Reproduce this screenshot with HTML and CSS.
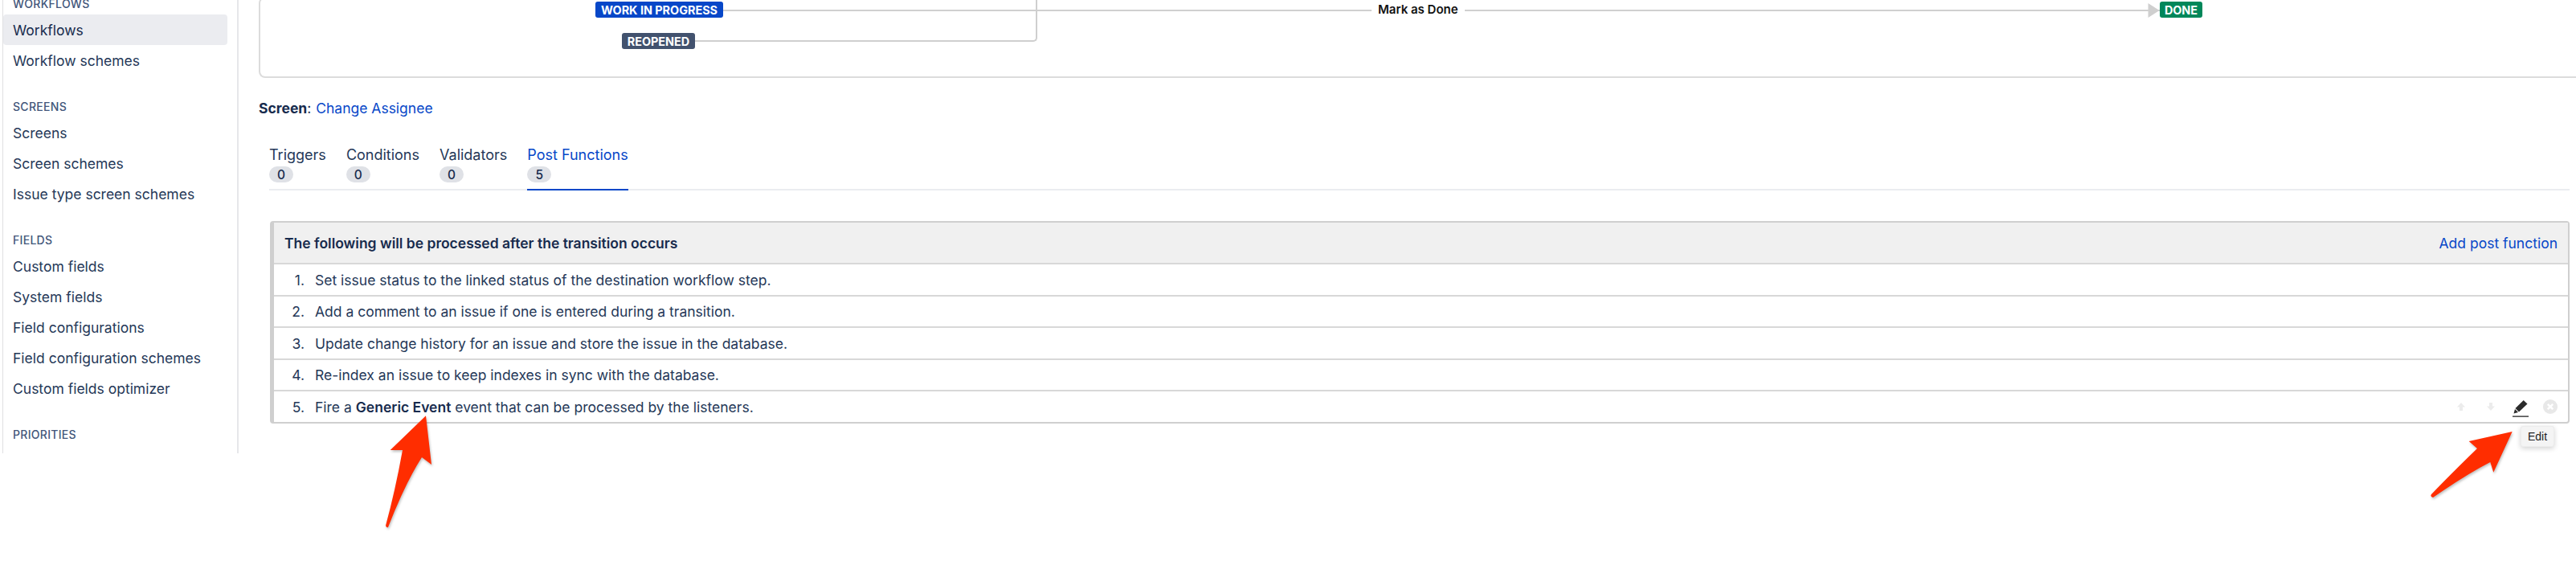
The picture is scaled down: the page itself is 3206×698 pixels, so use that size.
FILE: index.html
```html
<!DOCTYPE html>
<html lang="en">
<head>
<meta charset="utf-8">
<title>Transition: Post Functions</title>
<link rel="stylesheet" href="styles.css">
</head>
<body>
<div class="app">
  <nav class="sidebar">
    <div class="group">
      <h3 class="group-label">WORKFLOWS</h3>
      <a class="nav-item is-active">Workflows</a>
      <a class="nav-item">Workflow schemes</a>
    </div>
    <div class="group">
      <h3 class="group-label">SCREENS</h3>
      <a class="nav-item">Screens</a>
      <a class="nav-item">Screen schemes</a>
      <a class="nav-item">Issue type screen schemes</a>
    </div>
    <div class="group">
      <h3 class="group-label">FIELDS</h3>
      <a class="nav-item">Custom fields</a>
      <a class="nav-item">System fields</a>
      <a class="nav-item">Field configurations</a>
      <a class="nav-item">Field configuration schemes</a>
      <a class="nav-item">Custom fields optimizer</a>
    </div>
    <div class="group">
      <h3 class="group-label">PRIORITIES</h3>
    </div>
  </nav>
  <main class="main">
    <section class="diagram">
      <span class="status status-progress">WORK IN PROGRESS</span>
      <span class="status status-reopened">REOPENED</span>
      <span class="line line-main"></span>
      <span class="line-elbow"></span>
      <span class="transition-name">Mark as Done</span>
      <svg class="line-arrow" viewBox="0 0 14 18" aria-hidden="true"><path d="M0 0L14 9L0 18Z"/></svg>
      <span class="status status-done">DONE</span>
    </section>
    <p class="screen-line"><b class="screen-key">Screen</b>: <a class="link">Change Assignee</a></p>
    <ul class="tabs">
      <li class="tab"><span class="tab-name">Triggers</span><span class="count">0</span></li>
      <li class="tab"><span class="tab-name">Conditions</span><span class="count">0</span></li>
      <li class="tab"><span class="tab-name">Validators</span><span class="count">0</span></li>
      <li class="tab is-active"><span class="tab-name">Post Functions</span><span class="count">5</span></li>
    </ul>
    <section class="panel">
      <header class="panel-head">
        <h2 class="panel-title">The following will be processed after the transition occurs</h2>
        <a class="link">Add post function</a>
      </header>
      <ol class="rows">
        <li class="row"><span class="num">1.</span><span>Set issue status to the linked status of the destination workflow step.</span></li>
        <li class="row"><span class="num">2.</span><span>Add a comment to an issue if one is entered during a transition.</span></li>
        <li class="row"><span class="num">3.</span><span>Update change history for an issue and store the issue in the database.</span></li>
        <li class="row"><span class="num">4.</span><span>Re-index an issue to keep indexes in sync with the database.</span></li>
        <li class="row"><span class="num">5.</span><span>Fire a <b class="strong">Generic Event</b> event that can be processed by the listeners.</span>
          <div class="row-actions">
            <svg class="act act-arrow" viewBox="0 0 12 12" aria-hidden="true"><path d="M6 1L11 6.5H8V11H4V6.5H1Z"/></svg>
            <svg class="act act-arrow" viewBox="0 0 12 12" aria-hidden="true"><path d="M6 11L1 5.500H4V1H8V5.500H11Z"/></svg>
            <svg class="act act-pencil" viewBox="0 0 20 21" aria-hidden="true"><path class="pencil-body" d="M13.700 0L18.500 4.500L8 14.500L3.500 10Z"/><path class="pencil-body" d="M3 11L7 15L1.500 16.500Z"/><path class="pencil-base" d="M0 19.500H20V20.700H0Z"/></svg>
            <svg class="act act-close" viewBox="0 0 18 18" aria-hidden="true"><circle class="close-bg" cx="9" cy="9" r="9"/><path class="close-x" d="M5.800 5.800L12.200 12.200M12.200 5.800L5.800 12.200"/></svg>
          </div>
        </li>
      </ol>
      <div class="tooltip">Edit</div>
    </section>
  </main>
</div>
<svg class="callouts" viewBox="0 0 3206 698" aria-hidden="true">
  <path class="callout" d="M530 517.300L537 578L525 569Q505 600 483 656Q481 657 480 654Q492 610 501 560L485.700 560Z"/>
  <path class="callout" d="M3126.700 537L3103.300 587.700L3099.300 575Q3070 590 3028 619Q3024 618 3026 615Q3050 590 3083 558L3072.700 549Z"/>
</svg>
</body>
</html>
```
FILE: styles.css
```css
* { box-sizing: border-box; }
html, body { margin: 0; padding: 0; background: #fff; }
body {
  position: relative;
  height: 698px;
  overflow: hidden;
  font-family: Inter, "Liberation Sans", sans-serif;
  font-size: 17.5px;
  color: #172b4d;
}
a { text-decoration: none; color: inherit; }
ul, ol { list-style: none; margin: 0; padding: 0; }
h2, h3, p { margin: 0; }

.app { display: flex; height: 564px; overflow: hidden; }

.sidebar {
  flex: none;
  width: 294px;
  margin-left: 3px;
  border-left: 1.500px solid #e0e0e2;
  border-right: 2px solid #e6e7ea;
  padding-right: 12px;
}
.group { margin-top: 26px; }
.group:first-child { margin-top: -8px; }
.group-label {
  height: 26px;
  padding-left: 12px;
  font-size: 14px;
  font-weight: 500;
  line-height: 26px;
  letter-spacing: 0.3px;
  color: #42567a;
}
.nav-item {
  display: flex;
  align-items: center;
  height: 38px;
  padding-left: 12px;
  border-radius: 4px;
  color: #253858;
}
.nav-item.is-active { background: #ebecf0; color: #172b4d; }

.main { flex: 1; min-width: 0; padding-left: 25px; padding-right: 8px; }

.diagram {
  position: relative;
  height: 101px;
  margin-top: -4px;
  margin-right: -8px;
  border: 2px solid #dcdcdc;
  border-right: 0;
  border-radius: 8px 0 0 8px;
}
.status {
  position: absolute;
  display: flex;
  align-items: center;
  justify-content: center;
  height: 20px;
  border-radius: 3px;
  font-size: 14.400px;
  font-weight: 700;
  color: #fff;
}
.status-progress { left: 417px; top: 4px; width: 159px; background: #0747c8; }
.status-reopened { left: 450px; top: 43px; width: 91px; background: #42526e; }
.status-done { left: 2364px; top: 4px; width: 53px; background: #00875a; }
.line { position: absolute; display: block; background: #d0d0d0; }
.line-main { left: 576px; top: 14px; width: 1788px; height: 2px; }
.line-elbow {
  position: absolute;
  left: 541px;
  top: -2px;
  width: 426px;
  height: 56px;
  border-right: 2px solid #cfcfcf;
  border-bottom: 2px solid #cfcfcf;
  border-radius: 0 0 5px 0;
}
.transition-name {
  position: absolute;
  left: 1383px;
  top: 4px;
  padding: 0 8px;
  height: 20px;
  line-height: 20px;
  font-size: 15px;
  font-weight: 600;
  color: #111;
  background: #fff;
}
.line-arrow { position: absolute; left: 2349px; top: 6px; width: 15px; height: 18px; fill: #cfcfcf; }

.screen-line { margin-top: 26px; line-height: 24px; word-spacing: 1px; }
.screen-key { font-weight: 700; color: #172b4d; }
.link { color: #0747c8; word-spacing: 0; }

.tabs {
  display: flex;
  gap: 25px;
  margin: 34px 0 0 13px;
  border-bottom: 2px solid #ebecf0;
}
.tab {
  display: flex;
  flex-direction: column;
  align-items: flex-start;
  gap: 3px;
  height: 56px;
  margin-bottom: -2px;
  padding-top: 1px;
  border-bottom: 2px solid transparent;
  font-size: 18px;
}
.tab-name { line-height: 22px; color: #253858; }
.tab.is-active { border-bottom-color: #0747c8; }
.tab.is-active .tab-name { color: #0747c8; }
.count {
  display: flex;
  align-items: center;
  justify-content: center;
  width: 30px;
  height: 20px;
  border-radius: 10px;
  background: #dfe1e6;
  font-size: 15.500px;
  font-weight: 500;
  color: #172b4d;
}

.panel {
  position: relative;
  margin: 38px 0 0 14px;
  border: 2px solid #cfcfcf;
  border-left: 5px solid #cfcfcf;
  border-radius: 4px;
  width: 2862px;
}
.panel-head {
  display: flex;
  align-items: center;
  justify-content: space-between;
  height: 52.300px;
  padding: 0 13px;
  background: #f0f0f0;
  border-bottom: 2px solid #d8d8d8;
}
.panel-title { font-size: 17.500px; font-weight: 600; color: #172b4d; }
.row {
  display: flex;
  align-items: center;
  height: 39.500px;
  border-bottom: 2px solid #d8d8d8;
  color: #253858;
}
.row:last-child { height: 38px; border-bottom: 0; justify-content: space-between; }
.row > .num { flex: none; width: 51px; text-align: right; padding-right: 13px; }
.row:last-child > span:nth-child(2) { flex: 1; }
.strong { font-weight: 600; color: #172b4d; }

.row-actions { display: flex; align-items: center; padding-right: 13px; flex: none; }
.act { display: block; flex: none; }
.act-arrow { width: 12px; height: 12px; margin-right: 25px; fill: #ececec; }
.act-pencil { width: 20px; height: 21px; margin: 4px 18px 0 -4px; }
.pencil-body { fill: #2b2b2b; }
.pencil-base { fill: #111; }
.act-close { width: 18px; height: 18px; }
.close-bg { fill: #e8e8e8; }
.close-x { stroke: #fff; stroke-width: 2.500px; fill: none; }

.tooltip {
  position: absolute;
  right: 17px;
  top: 253px;
  display: flex;
  align-items: center;
  justify-content: center;
  width: 42px;
  height: 26px;
  border-radius: 3px;
  background: #f4f4f4;
  border: 1px solid #ececec;
  box-shadow: 0 2px 6px rgba(0,0,0,.18);
  font-family: "Liberation Sans", Arial, sans-serif;
  font-size: 14px;
  color: #222;
}

.callouts { position: absolute; left: 0; top: 0; width: 3206px; height: 698px; pointer-events: none; }
.callout { fill: #ff2d00; filter: drop-shadow(1px 2px 1.500px rgba(0,0,0,.25)); }
```
